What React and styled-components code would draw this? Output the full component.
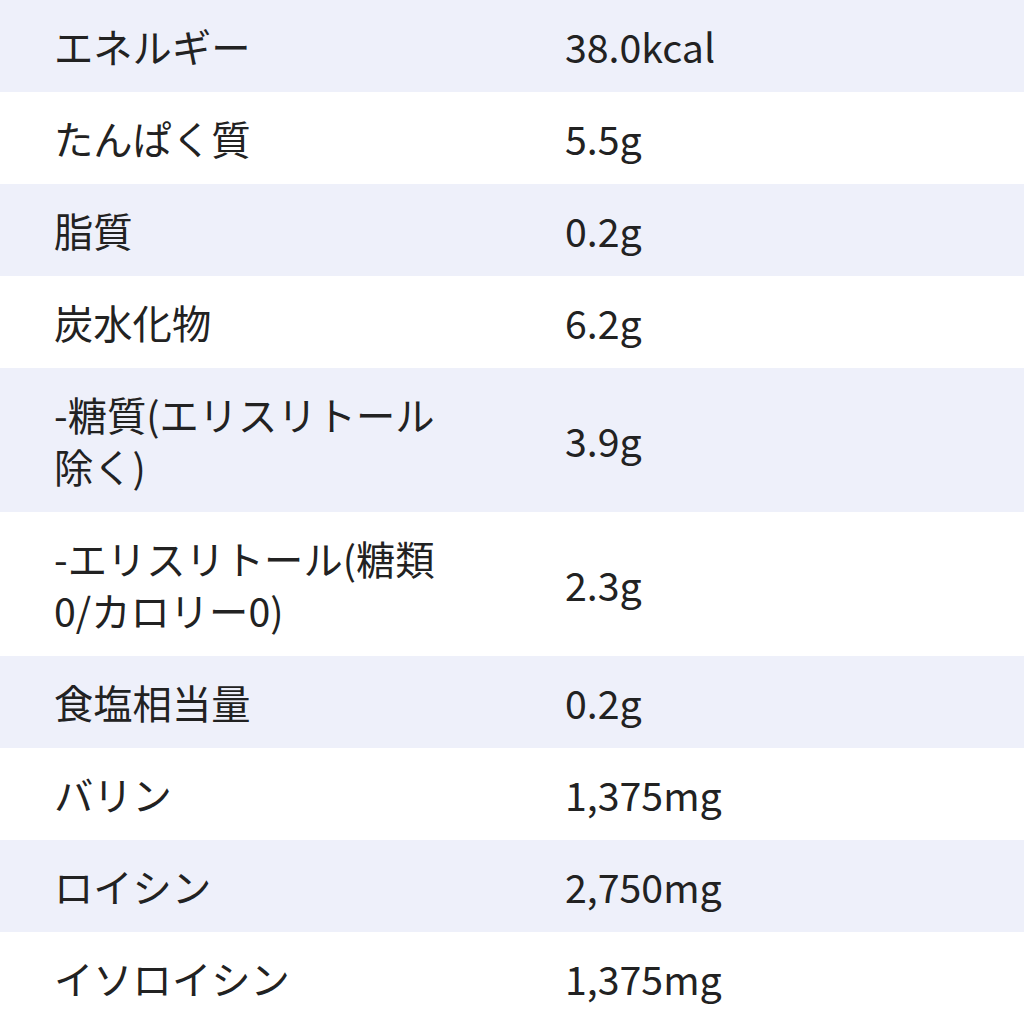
import React from "react";
import styled, { createGlobalStyle } from "styled-components";

const GlobalStyle = createGlobalStyle`
  html, body {
    margin: 0;
    padding: 0;
    background: #fff;
  }
  body {
    font-family: "Noto Sans CJK JP", "Noto Sans", sans-serif;
    color: #222222;
  }
`;

const Table = styled.div`
  width: 1024px;
  display: flex;
  flex-direction: column;
`;

const Row = styled.div`
  display: grid;
  grid-template-columns: 512px 1fr;
  align-items: center;
  background: ${(p) => (p.$shaded ? "#eef0fa" : "#ffffff")};
`;

const Label = styled.div`
  padding: 20px 60px 20px 54px;
  font-size: 39.3px;
  line-height: 52px;
`;

const Value = styled.div`
  padding: 20px 0 20px 53px;
  font-size: 39.3px;
  line-height: 52px;
`;

const rows = [
  ["エネルギー", "38.0kcal"],
  ["たんぱく質", "5.5g"],
  ["脂質", "0.2g"],
  ["炭水化物", "6.2g"],
  ["-糖質(エリスリトール除く)", "3.9g"],
  ["-エリスリトール(糖類0/カロリー0)", "2.3g"],
  ["食塩相当量", "0.2g"],
  ["バリン", "1,375mg"],
  ["ロイシン", "2,750mg"],
  ["イソロイシン", "1,375mg"],
];

const App = () => {
  return (
    <>
      <GlobalStyle />
      <Table>
        {rows.map(([label, value], i) => (
          <Row key={label} $shaded={i % 2 === 0}>
            <Label>{label}</Label>
            <Value>{value}</Value>
          </Row>
        ))}
      </Table>
    </>
  );
};

export default App;
